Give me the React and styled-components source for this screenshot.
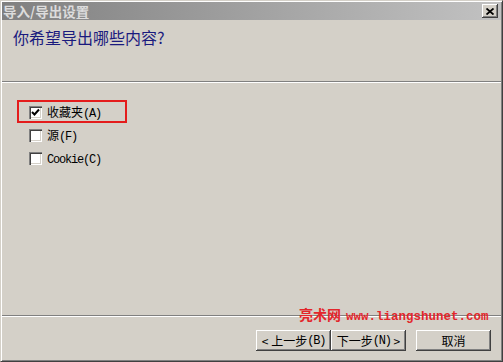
import React from "react";
import styled, { createGlobalStyle } from "styled-components";

const Global = createGlobalStyle`
  html, body { margin: 0; padding: 0; background: #d4d0c8; }
  * { box-sizing: border-box; }
`;

const CJK = `"Noto Sans CJK SC", "Liberation Sans", sans-serif`;
const MONO = `"Liberation Mono", "Noto Sans CJK SC", monospace`;

const Window = styled.div`
  position: relative;
  width: 503px;
  height: 362px;
  background: #d4d0c8;
  border-top: 1px solid #d4d0c8;
  border-left: 1px solid #d4d0c8;
  border-right: 1px solid #404040;
  border-bottom: 1px solid #404040;
  padding: 1px;
  box-shadow: inset 1px 1px 0 #ffffff, inset -1px -1px 0 #808080;
  display: flex;
  flex-direction: column;
  font-family: ${CJK};
`;

const TitleBar = styled.div`
  height: 18px;
  flex: none;
  display: flex;
  align-items: center;
  justify-content: space-between;
  padding: 0 3px 0 1px;
  background: linear-gradient(to right, #808080, #c2c2c2);
`;

const TitleText = styled.span`
  font-family: ${CJK};
  font-size: 13.5px;
  font-weight: 700;
  color: #dcdcdc;
  line-height: 18px;
`;

const CloseButton = styled.div`
  width: 16px;
  height: 14px;
  background: #d4d0c8;
  box-shadow: inset -1px -1px 0 #404040, inset 1px 1px 0 #ffffff,
    inset -2px -2px 0 #808080;
  display: flex;
  align-items: center;
  justify-content: center;
`;

const Header = styled.div`
  height: 61px;
  flex: none;
  padding: 7px 11px 0;
`;

const Heading = styled.h1`
  margin: 0;
  font-family: ${CJK};
  font-weight: 400;
  font-size: 16px;
  line-height: 20px;
  color: #1a1a7e;
`;

const Separator = styled.div`
  height: 2px;
  flex: none;
  border-top: 1px solid #808080;
  border-bottom: 1px solid #ffffff;
`;

const Content = styled.div`
  flex: 1;
  padding: 17px 15px 0;
  display: flex;
  flex-direction: column;
  align-items: flex-start;
`;

const Row = styled.label`
  display: flex;
  align-items: center;
  gap: 5px;
  width: 110px;
  padding: 3px 10px 1px;
  border: 2px solid ${(p) => (p.$highlight ? "#e41c1c" : "transparent")};
  height: 23px;
`;

const Box = styled.span`
  width: 13px;
  height: 13px;
  flex: none;
  background: #ffffff;
  box-shadow: inset 1px 1px 0 #808080, inset 2px 2px 0 #404040,
    inset -1px -1px 0 #ffffff, inset -2px -2px 0 #d4d0c8;
  display: flex;
  align-items: center;
  justify-content: center;
`;

const Label = styled.span`
  font-family: ${CJK};
  font-size: 12px;
  line-height: 15px;
  color: #000;
  white-space: nowrap;
`;

const Latin = styled.span`
  font-family: ${MONO};
  font-size: 12px;
  letter-spacing: -1.2px;
`;

const Footer = styled.div`
  height: 43px;
  flex: none;
  display: flex;
  justify-content: flex-end;
  align-items: flex-start;
  padding: 13px 10px 0;
`;

const Button = styled.button`
  width: 75px;
  height: 21px;
  margin-left: ${(p) => p.$gap || 0}px;
  padding: 0;
  border: none;
  background: #d4d0c8;
  box-shadow: inset -1px -1px 0 #404040, inset 1px 1px 0 #ffffff,
    inset -2px -2px 0 #808080;
  font-family: ${CJK};
  font-size: 12px;
  color: #000;
  display: flex;
  align-items: center;
  justify-content: center;
  white-space: nowrap;
`;

const Watermark = styled.div`
  position: absolute;
  left: 298px;
  top: 303px;
  display: flex;
  align-items: baseline;
  gap: 5px;
  color: #e3262b;
  pointer-events: none;
`;

const WaterCJK = styled.span`
  font-family: ${CJK};
  font-size: 14px;
  font-weight: 700;
`;

const WaterUrl = styled.span`
  font-family: ${MONO};
  font-size: 12.5px;
  font-weight: 700;
`;

function Check() {
  return (
    <svg width="9" height="9" viewBox="0 0 9 9">
      <polyline
        points="1,4 3.5,6.5 8,1.5"
        fill="none"
        stroke="#000"
        strokeWidth="2"
      />
    </svg>
  );
}

function CloseX() {
  return (
    <svg width="8" height="7" viewBox="0 0 8 7">
      <path d="M0.5 0.5 L7.5 6.5 M7.5 0.5 L0.5 6.5" stroke="#000" strokeWidth="1.8" />
    </svg>
  );
}

const items = [
  { cjk: "收藏夹", key: "(A)", checked: true },
  { cjk: "源", key: "(F)", checked: false },
  { cjk: "", latin: "Cookie", key: "(C)", checked: false },
];

export default function App() {
  return (
    <>
      <Global />
      <Window>
        <TitleBar>
          <TitleText>导入/导出设置</TitleText>
          <CloseButton>
            <CloseX />
          </CloseButton>
        </TitleBar>
        <Header>
          <Heading>你希望导出哪些内容?</Heading>
        </Header>
        <Separator />
        <Content>
          {items.map((it, i) => (
            <Row key={i} $highlight={i === 0}>
              <Box>{it.checked && <Check />}</Box>
              <Label>
                {it.cjk}
                <Latin>
                  {it.latin || ""}
                  {it.key}
                </Latin>
              </Label>
            </Row>
          ))}
        </Content>
        <Separator />
        <Footer>
          <Button>
            &lt; 上一步<Latin>(B)</Latin>
          </Button>
          <Button>
            下一步<Latin>(N)</Latin>&nbsp;&gt;
          </Button>
          <Button $gap={10}>取消</Button>
        </Footer>
        <Watermark>
          <WaterCJK>亮术网</WaterCJK>
          <WaterUrl>www.liangshunet.com</WaterUrl>
        </Watermark>
      </Window>
    </>
  );
}
